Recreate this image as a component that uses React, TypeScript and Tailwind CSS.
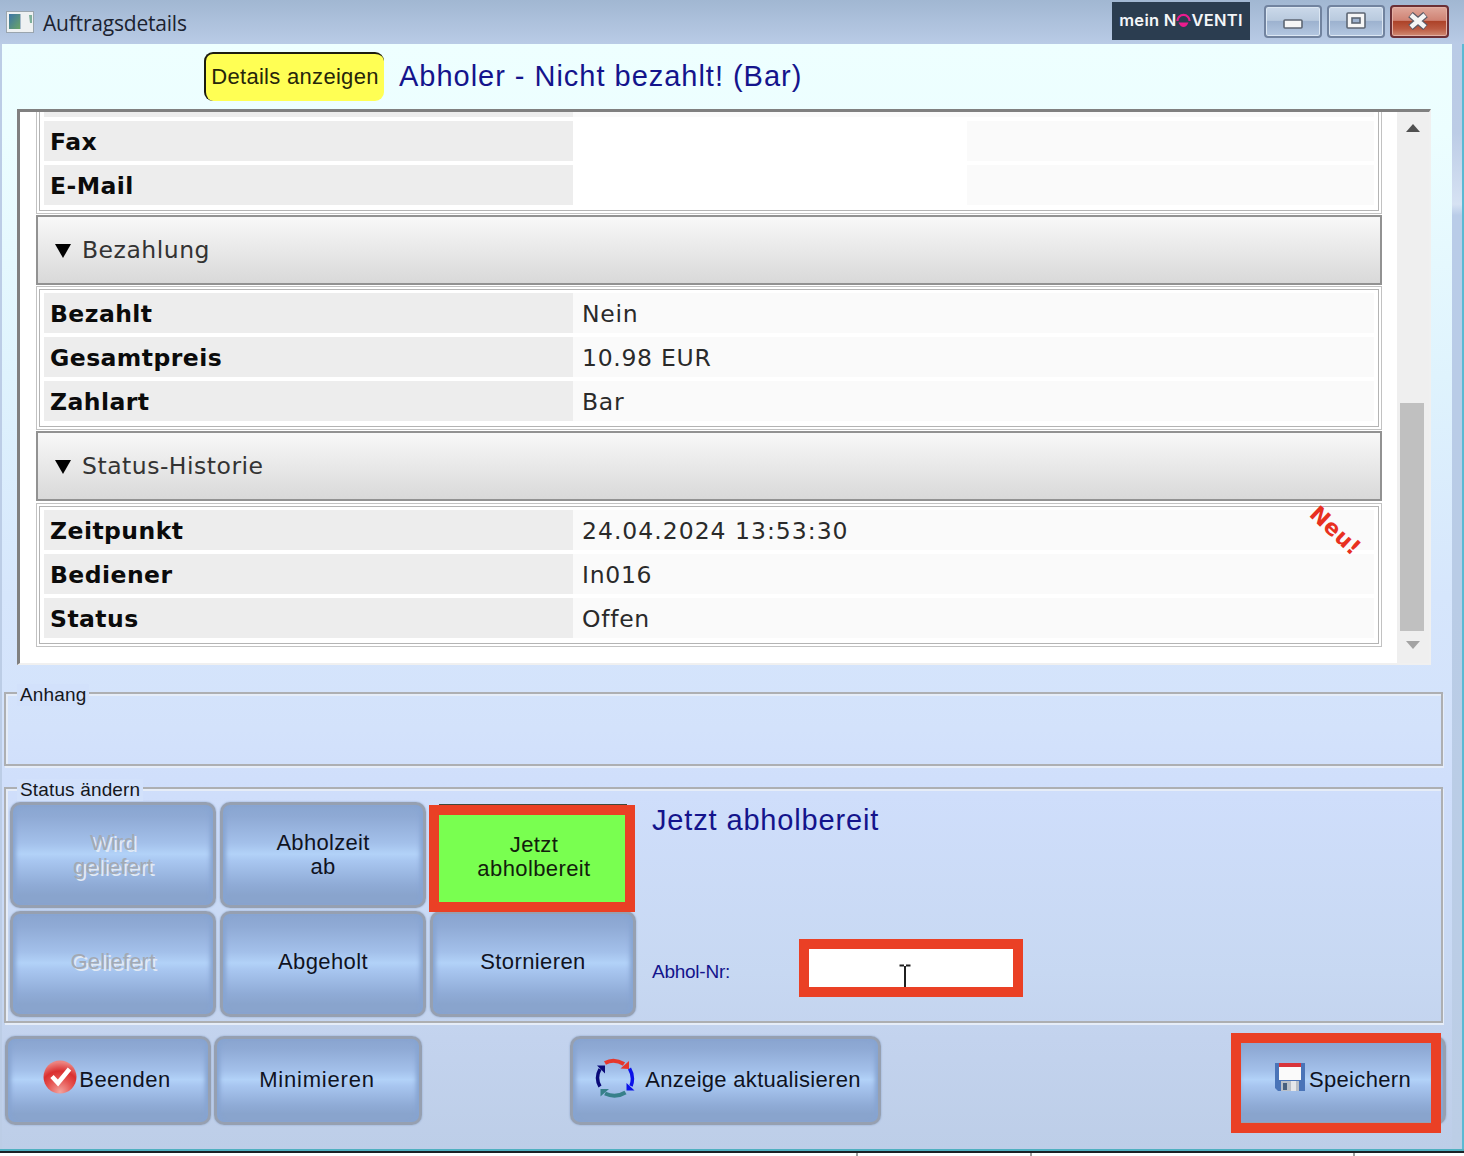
import React from 'react';

interface Row {
    label: string;
    value?: string;
    numeric?: boolean;
}

interface ActionButtonProps {
    className: string;
    disabled?: boolean;
    children: React.ReactNode;
}

const paymentRows: Row[] = [
    { label: 'Bezahlt', value: 'Nein' },
    { label: 'Gesamtpreis', value: '10.98 EUR' },
    { label: 'Zahlart', value: 'Bar' },
];

const historyRows: Row[] = [
    { label: 'Zeitpunkt', value: '24.04.2024 13:53:30', numeric: true },
    { label: 'Bediener', value: 'In016' },
    { label: 'Status', value: 'Offen' },
];

const DetailRow: React.FC<Row> = ({ label, value, numeric }) => (
    <div className="flex h-10 shrink-0 items-center leading-none text-[23.5px]">
        <div className="flex h-full w-[529px] shrink-0 items-center bg-[#ededed] pl-1.5 pt-[3px] font-bold tracking-[0.45px] text-[#0b0b0b]">{label}</div>
        <div className={`flex h-full flex-1 items-center bg-[#fafafa] pl-[9px] pt-[3px] text-[#2a2a2a] ${numeric ? 'tracking-[1px]' : 'tracking-[0.7px]'}`}>{value}</div>
    </div>
);

const DetailTable: React.FC<{ rows: Row[]; children?: React.ReactNode }> = ({ rows, children }) => (
    <div className="relative h-36 border border-[#c2c2c2] bg-white p-0.5">
        <div className="flex h-full flex-col gap-1 border border-[#b4b4b4] px-1 pt-[3px]">
            {rows.map(row => <DetailRow key={row.label} {...row} />)}
        </div>
        {children}
    </div>
);

const SectionHeader: React.FC<{ title: string }> = ({ title }) => (
    <div className="flex h-[70px] items-center border-2 border-[#929292] bg-linear-to-b from-[#f8f8f8] to-[#d9d9d9] pl-[16px] pt-0.5 text-[23.5px] tracking-[0.5px] text-[#333]">
        <svg width="18" height="16" viewBox="0 0 18 16" className="mr-[10px]">
            <path d="M1 1h16L9 15z" fill="#000" />
        </svg>
        {title}
    </div>
);

const ActionButton: React.FC<ActionButtonProps> = ({ className, disabled, children }) => (
    <button
        disabled={disabled}
        className={`flex shrink-0 items-center justify-center rounded-[10px] border-[3px] border-[#96a0b1] bg-[linear-gradient(180deg,#89a5d0_0%,#8faad5_12%,#a3c0ea_38%,#b2d2f8_49%,#a8c6f0_56%,#8fabd6_80%,#89a4cd_90%,#89a4cd_100%)] text-center text-[22px] leading-6 shadow-[0_0_2px_#86a0c8,inset_5px_0_4px_-2px_#86a4d2,inset_-5px_0_4px_-2px_#86a4d2] ${disabled ? 'text-[#a3a9b3] [text-shadow:2px_2px_0_#e2eaf4]' : 'text-[#10131f]'} ${className}`}
    >
        {children}
    </button>
);

const GroupBox: React.FC<{ title: string; className: string; children?: React.ReactNode }> = ({ title, className, children }) => (
    <div className={`relative border-2 border-[#adafb2] shadow-[inset_2px_2px_0_#e6edf8,1px_2px_0_#e6edf8] ${className}`}>
        <span className="absolute -top-2.5 left-[11px] bg-[#d2e1fb] px-[3px] text-[19px] leading-[22px] tracking-[0.15px] text-[#15171c]">{title}</span>
        {children}
    </div>
);

const TitleBar: React.FC = () => (
    <div className="flex h-11 shrink-0 items-start bg-linear-to-b from-[#a1b7d2] to-[#b9cbe6]">
        <svg width="28" height="22" viewBox="0 0 28 22" className="ml-1.5 mt-[11px]">
            <rect x="0.5" y="0.5" width="27" height="21" fill="#eef1f2" stroke="#9aa5ae" />
            <defs>
                <linearGradient id="appIcon" x1="0" y1="0" x2="1" y2="1">
                    <stop offset="0" stopColor="#3d75a8" />
                    <stop offset="1" stopColor="#6aa565" />
                </linearGradient>
            </defs>
            <rect x="3" y="3" width="11" height="15" fill="url(#appIcon)" />
            <path d="M14 3h1v15h-1z" fill="#a7bccb" />
            <path d="M23 4h3v8h-2z" fill="#7eb09b" />
        </svg>
        <span className="ml-[9px] mt-2 font-['Open_Sans',sans-serif] text-[21px] leading-[30px] tracking-[-0.2px] text-[#1b2230]">Auftragsdetails</span>
        <div className="ml-auto mr-[14px] mt-0.5 flex h-[38px] w-[138px] items-center justify-center bg-[#2b3d50] pb-0.5 font-[Inter,sans-serif] text-[16.5px] font-semibold tracking-[0.25px] text-[#f4f6f8]">
            mein&nbsp;N
            <svg width="15" height="15" viewBox="0 0 15 15" className="shrink-0">
                <path d="M1.400 8A6.100 6.100 0 1 1 13.600 8" fill="none" stroke="#ec1c8e" strokeWidth="2.2" />
                <path d="M2.500 9.500h10Q10.500 14 7.500 14T2.500 9.500z" fill="#ec1c8e" />
            </svg>
            VENTI
        </div>
        <div className="mr-[15px] mt-[5px] flex gap-[5px]">
            <div className="flex h-[33px] w-[58px] items-center justify-center rounded-[4px] border-2 border-[#71839f] bg-[linear-gradient(180deg,#cbd9ea_0%,#b9cade_46%,#9db2cf_50%,#b4c8e1_100%)] shadow-[inset_0_0_0_1px_#dce7f3]">
                <svg width="20" height="10" viewBox="0 0 20 10" className="mt-1">
                    <rect x="1" y="1" width="18" height="8" rx="1" fill="#f6f6f6" stroke="#5d6673" strokeWidth="1.6" />
                </svg>
            </div>
            <div className="flex h-[33px] w-[58px] items-center justify-center rounded-[4px] border-2 border-[#71839f] bg-[linear-gradient(180deg,#cbd9ea_0%,#b9cade_46%,#9db2cf_50%,#b4c8e1_100%)] shadow-[inset_0_0_0_1px_#dce7f3]">
                <svg width="20" height="17" viewBox="0 0 20 17" className="mb-0.5">
                    <rect x="1" y="1" width="18" height="15" rx="1" fill="#f6f6f6" stroke="#5d6673" strokeWidth="1.6" />
                    <rect x="6" y="6" width="8" height="5" fill="#9db2cf" stroke="#5d6673" strokeWidth="1.6" />
                </svg>
            </div>
            <div className="flex h-[33px] w-[59px] items-center justify-center rounded-[4px] border-2 border-[#6b2f35] bg-[linear-gradient(180deg,#dfa79b_0%,#cf8374_46%,#ad4329_50%,#bb5a41_75%,#d08c74_100%)] shadow-[inset_0_0_0_1px_#e3b0a4]">
                <svg width="22" height="18" viewBox="0 0 22 18" className="mr-1 mb-0.5">
                    <path d="M3.500 2.500l15 13M18.500 2.500l-15 13" stroke="#5c5a66" strokeWidth="7" />
                    <path d="M4 3l14 12M18 3l-14 12" stroke="#f5f5f5" strokeWidth="4.6" />
                </svg>
            </div>
        </div>
    </div>
);

const DetailsPanel: React.FC = () => (
    <div className="ml-[15px] flex h-[556px] w-[1414px] shrink-0 overflow-hidden border-l-[3px] border-t-[3px] border-b-2 border-r-2 border-b-[#f0f0f0] border-l-[#808080] border-r-[#f0f0f0] border-t-[#808080] bg-white font-['DejaVu_Sans',Verdana,sans-serif]">
        <div className="ml-4 w-[1346px]">
            <div className="relative h-[102px] border-x border-b border-[#c2c2c2] px-0.5 pb-0.5">
                <div className="flex h-full flex-col justify-end gap-1 border-x border-b border-[#b4b4b4] px-1 pb-[5px]">
                    <div className="flex h-[5px]">
                        <div className="w-[529px] bg-[#ededed]" />
                        <div className="flex-1 bg-[#fafafa]" />
                    </div>
                    <DetailRow label="Fax" />
                    <DetailRow label="E-Mail" />
                </div>
                {/* blanked contact data */}
                <div className="absolute left-[536px] top-2 h-[86px] w-[394px] bg-white" />
            </div>
            <div className="mt-px mb-px"><SectionHeader title="Bezahlung" /></div>
            <DetailTable rows={paymentRows} />
            <div className="mt-px mb-0.5"><SectionHeader title="Status-Historie" /></div>
            <DetailTable rows={historyRows}>
                <span className="absolute left-[1268px] top-[16px] rotate-[43deg] text-[22px] leading-none font-bold tracking-[0.3px] text-[#e8301f]">Neu!</span>
            </DetailTable>
        </div>
        <div className="ml-auto flex w-8 flex-col items-center bg-[#efefef]">
            <svg width="14" height="8" viewBox="0 0 14 8" className="mr-px mt-3"><path d="M0 8L7 0l7 8z" fill="#505050" /></svg>
            <div className="mr-0.5 mt-[271px] h-[228px] w-6 bg-[#c0c0c0]" />
            <svg width="14" height="8" viewBox="0 0 14 8" className="mr-px mt-2.5"><path d="M0 0h14L7 8z" fill="#a3a3a3" /></svg>
        </div>
    </div>
);

const StatusBox: React.FC = () => (
    <GroupBox title="Status ändern" className="mt-[21px] ml-0.5 flex h-[236px] w-[1439px] shrink-0 pl-1 pt-[13px]">
        <div className="grid h-[214px] grid-cols-[206px_206px_206px] grid-rows-[106px_106px] gap-x-1 gap-y-[3px]">
            <ActionButton disabled className="tracking-[0.2px]">Wird<br />geliefert</ActionButton>
            <ActionButton className="tracking-[0.3px]">Abholzeit<br />ab</ActionButton>
            <div className="relative -ml-px mr-px">
                <div className="ml-2.5 mt-0.5 h-1 w-[188px] bg-[#404a3c]" />
                <button className="absolute left-0 top-[3px] flex h-[107px] w-[206px] items-center justify-center border-10 border-[#ea4025] bg-[#79ff50] pb-1 pl-1 text-center text-[22px] leading-6 tracking-[0.4px] text-[#12200c]">Jetzt<br />abholbereit</button>
            </div>
            <ActionButton disabled className="pb-1 tracking-[0.2px]">Geliefert</ActionButton>
            <ActionButton className="pb-1 tracking-[0.4px]">Abgeholt</ActionButton>
            <ActionButton className="pb-1 tracking-[0.4px]">Stornieren</ActionButton>
        </div>
        <div className="ml-4 text-[#14148c]">
            <div className="h-[137px] text-[29px] leading-9 tracking-[0.85px]">Jetzt abholbereit</div>
            <div className="flex">
                <span className="mt-[22px] w-[147px] text-[19px] leading-[22px] tracking-[-0.25px]">Abhol-Nr:</span>
                <div className="relative flex h-[58px] w-[224px] justify-center overflow-hidden border-10 border-[#ea4025] bg-white">
                    <svg width="12" height="24" viewBox="0 0 12 24" className="mt-[15px] mr-3 shrink-0">
                        <path d="M0.500 1.500H5M7 1.500h4.500M6 2v22" stroke="#202020" strokeWidth="2" fill="none" />
                    </svg>
                </div>
            </div>
        </div>
    </GroupBox>
);

const Footer: React.FC = () => (
    <div className="relative mt-[13px] flex h-[89px] shrink-0 pl-[3px]">
        <ActionButton className="w-[206px] pb-0.5 pr-0.5 tracking-[0.5px]">
            <svg width="34" height="34" viewBox="0 0 34 34" className="mr-0.5 -mt-1.5">
                <defs>
                    <radialGradient id="okBall" cx="0.5" cy="0.95" r="0.9">
                        <stop offset="0" stopColor="#f3a39d" />
                        <stop offset="0.45" stopColor="#e5504d" />
                        <stop offset="0.7" stopColor="#da2f30" />
                        <stop offset="1" stopColor="#ec8480" />
                    </radialGradient>
                </defs>
                <circle cx="17" cy="17" r="16.500" fill="url(#okBall)" />
                <path d="M9 16.500l6 6.500 11.500-14" fill="none" stroke="#fff" strokeWidth="4.500" />
            </svg>
            Beenden
        </ActionButton>
        <ActionButton className="ml-[3px] w-[208px] pb-0.5 pr-0.5 tracking-[0.8px]">Minimieren</ActionButton>
        <ActionButton className="ml-[148px] w-[311px] pb-0.5 pl-[5px] tracking-[0.3px]">
            <svg width="40" height="40" viewBox="0 0 40 40" className="mr-[10px] -mt-1">
                <path d="M10 5Q19 0 29 6" fill="none" stroke="#e6372c" strokeWidth="4" />
                <path d="M34 3V11L25.500 10.500z" fill="#e6372c" />
                <path d="M34.500 10.500Q39.500 19 36 28" fill="none" stroke="#0b12e8" strokeWidth="3.5" />
                <path d="M31.500 25V32.500h8z" fill="#0b12e8" />
                <path d="M30.500 34.500Q20.500 40.500 10 35.500" fill="none" stroke="#37808a" strokeWidth="4" />
                <path d="M5.500 31h8.500L5.500 38.500z" fill="#37808a" />
                <path d="M5 28.500Q0 20 5 11" fill="none" stroke="#0a0a78" strokeWidth="3.5" />
                <path d="M2 7.500h8v8z" fill="#0a0a78" />
            </svg>
            Anzeige aktualisieren
        </ActionButton>
        <ActionButton className="ml-[353px] w-[212px] pb-0.5 pl-0.5 tracking-[0.35px]">
            <svg width="30" height="28" viewBox="0 0 30 28" className="mr-1 ml-1 -mt-1.5">
                <path d="M0 0h30v28H3l-3-3z" fill="#4a74b8" />
                <path d="M4 1h22v16H4z" fill="#fafafa" />
                <path d="M4 0h22v4H4z" fill="#d8343a" />
                <path d="M6 18h18v10H6z" fill="#b9bfc8" />
                <path d="M8 20h4v7H8z" fill="#48607f" />
                <path d="M16 18h5v10h-5z" fill="#e4e6ea" />
            </svg>
            Speichern
        </ActionButton>
        <div className="absolute -top-[3px] left-[1229px] h-[100px] w-[210px] border-10 border-[#ea4025]" />
    </div>
);

export default function App() {
    return (
        <div className="flex h-[1156px] w-[1464px] flex-col overflow-hidden bg-white font-['Liberation_Sans',Arial,sans-serif]">
            <div className="flex h-[1149px] flex-col">
                <TitleBar />
                <div className="flex min-h-0 flex-1">
                    <div className="w-0.5 bg-[#bccde6]" />
                    <div className="flex w-[1450px] flex-col bg-[linear-gradient(180deg,#eeffff_0%,#ecfeff_8%,#dff3fd_30%,#d6e6fc_50%,#d3e2fb_62%,#cfdefb_68%,#c7d8f2_84%,#c3d3ee_90%,#bdcee8_100%)]">
                        <div className="flex h-[65px] shrink-0 items-start">
                            <button className="ml-[202px] mt-2 h-[49px] w-[180px] rounded-[9px] border-l-2 border-t-2 border-[#1c1c10] bg-[#ffff54] pb-[3px] text-[22px] tracking-[0.3px] text-[#26260a]">Details anzeigen</button>
                            <h1 className="ml-[15px] mt-3.5 text-[29px] leading-9 tracking-[0.98px] text-[#14148c]">Abholer - Nicht bezahlt! (Bar)</h1>
                        </div>
                        <DetailsPanel />
                        <GroupBox title="Anhang" className="mt-[27px] ml-0.5 h-[74px] w-[1439px] shrink-0" />
                        <StatusBox />
                        <Footer />
                    </div>
                    <div className="w-2.5 bg-[linear-gradient(180deg,#b9cbe6_0%,#bccce6_8%,#d6e2f3_14.500%,#b9cce8_15.500%,#b9cce6_50%,#bccee6_100%)]" />
                    <div className="w-0.5 bg-[#5bb9d3]" />
                </div>
            </div>
            <div className="h-0.5 bg-[#4fb0c0]" />
            <div className="h-0.5 bg-[#1b2226]" />
            <div className="flex h-[3px]">
                <div className="w-[858px] border-r-2 border-[#a0a0a0]" />
                <div className="w-[174px] border-r-2 border-[#a0a0a0]" />
                <div className="w-[323px] border-r-2 border-[#a0a0a0]" />
            </div>
        </div>
    );
}
